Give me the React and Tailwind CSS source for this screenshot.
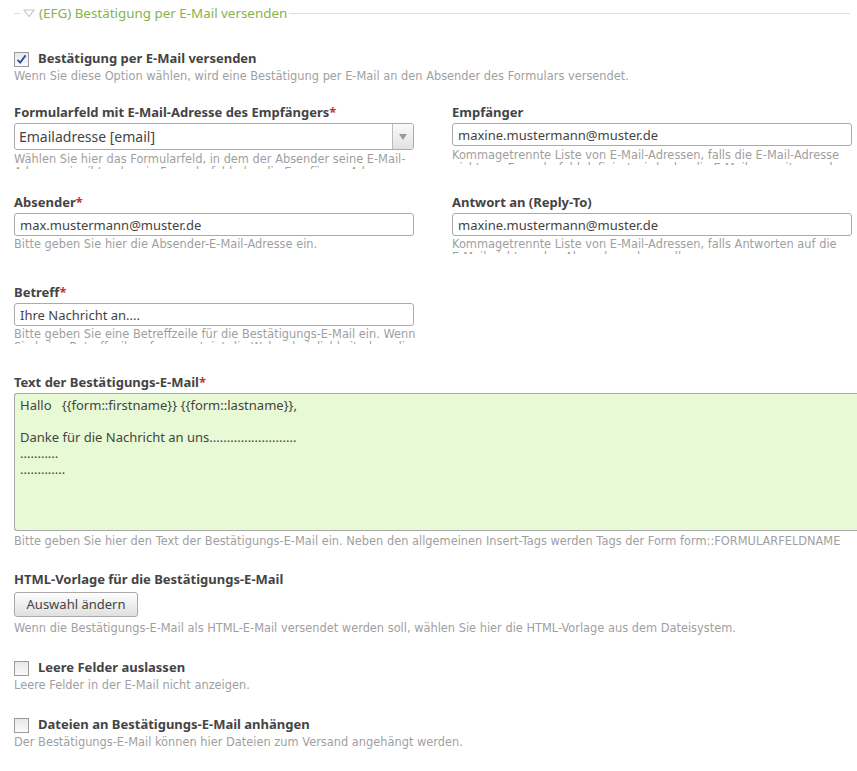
import React from 'react';

const labelFont = { fontFamily: '"Noto Sans", "Open Sans", sans-serif' };
const helpFont = { fontFamily: '"DejaVu Sans", Verdana, sans-serif' };

const Label = ({ children, required }) => (
  <div className="h-[16px] text-[13px] leading-[16px] font-bold text-[#444]" style={labelFont}>
    {children}
    {required && <span className="text-[#c33]">*</span>}
  </div>
);

const Help = ({ children, clip, className = '' }) => (
  <div
    className={`text-[11.4px] leading-[13px] text-[#9f9f9f] ${clip ? 'h-[16px] w-[410px] overflow-hidden' : ''} ${className}`}
    style={helpFont}
  >
    {children}
  </div>
);

const TextInput = ({ value }) => (
  <input
    readOnly
    defaultValue={value}
    className="mt-[3px] block h-[23px] w-[400px] rounded-[3px] border border-[#aaa] bg-white px-[5px] text-[13px] text-[#444] outline-none"
    style={labelFont}
  />
);

const Checkbox = ({ checked }) => (
  <span className="flex h-[15px] w-[15px] shrink-0 items-center justify-center border border-[#9a9a9a] bg-gradient-to-b from-[#e8e8e8] to-[#fafafa]">
    {checked && (
      <svg width="11" height="11" viewBox="0 0 11 11">
        <path d="M1.5 5.8 L4.2 8.6 L9.6 1.4" fill="none" stroke="#2a4fa8" strokeWidth="1.8" />
      </svg>
    )}
  </span>
);

const CheckRow = ({ checked, label, help }) => (
  <div>
    <div className="flex h-[16px] items-center gap-[9px]">
      <Checkbox checked={checked} />
      <span className="text-[13px] font-bold text-[#444]" style={labelFont}>{label}</span>
    </div>
    <Help className="mt-[3px]">{help}</Help>
  </div>
);

export default function App() {
  return (
    <div className="min-h-[771px] w-[857px] overflow-hidden bg-white pl-[14px]">
      {/* legend */}
      <div className="flex h-[26px] items-center">
        <span className="h-px w-[6px] bg-[#ddd]" />
        <svg width="14" height="10" viewBox="0 0 14 10" className="ml-[2px]">
          <path d="M2 2 L12 2 L7 8.5 Z" fill="none" stroke="#c8c8c8" strokeWidth="1.2" />
        </svg>
        <span className="ml-[3px] text-[13.4px] text-[#85b54a]" style={labelFont}>(EFG) Bestätigung per E-Mail versenden</span>
        <span className="ml-[2px] mr-[7px] h-px flex-1 bg-[#ddd]" />
      </div>

      <div className="mt-[25px]">
        <CheckRow
          checked
          label="Bestätigung per E-Mail versenden"
          help="Wenn Sie diese Option wählen, wird eine Bestätigung per E-Mail an den Absender des Formulars versendet."
        />
      </div>

      {/* row 1 */}
      <div className="mt-[21px] flex h-[90px] gap-[38px]">
        <div className="w-[400px]">
          <Label required>Formularfeld mit E-Mail-Adresse des Empfängers</Label>
          <div className="mt-[3px] flex h-[27px] w-[400px] overflow-hidden rounded-[3px] border border-[#aaa] bg-white">
            <div className="flex flex-1 items-center px-[4px] text-[14px] text-[#444]" style={labelFont}>Emailadresse [email]</div>
            <div className="flex w-[21px] items-center justify-center border-l border-[#bbb] bg-gradient-to-b from-[#fafafa] to-[#e2e2e2]">
              <svg width="8" height="6" viewBox="0 0 8 6">
                <path d="M0 0 L8 0 L4 6 Z" fill="#999" />
              </svg>
            </div>
          </div>
          <Help clip className="mt-[3px]">Wählen Sie hier das Formularfeld, in dem der Absender seine E-Mail-Adresse eingibt, oder ein Formularfeld, das die Empfänger-Adresse enthält.</Help>
        </div>
        <div className="w-[400px]">
          <Label>Empfänger</Label>
          <TextInput value="maxine.mustermann@muster.de" />
          <Help clip className="mt-[3px]">Kommagetrennte Liste von E-Mail-Adressen, falls die E-Mail-Adresse nicht aus Formularfeld definiert wird oder die E-Mail an weitere gehen soll.</Help>
        </div>
      </div>

      {/* row 2 */}
      <div className="flex h-[90px] gap-[38px]">
        <div className="w-[400px]">
          <Label required>Absender</Label>
          <TextInput value="max.mustermann@muster.de" />
          <Help clip className="mt-[2px]">Bitte geben Sie hier die Absender-E-Mail-Adresse ein.</Help>
        </div>
        <div className="w-[400px]">
          <Label>Antwort an (Reply-To)</Label>
          <TextInput value="maxine.mustermann@muster.de" />
          <Help clip className="mt-[2px]">Kommagetrennte Liste von E-Mail-Adressen, falls Antworten auf die E‑Mail nicht an den Absender gehen sollen.</Help>
        </div>
      </div>

      {/* row 3 */}
      <div className="flex h-[90px] gap-[38px]">
        <div className="w-[400px]">
          <Label required>Betreff</Label>
          <TextInput value="Ihre Nachricht an...." />
          <Help clip className="mt-[2px]">Bitte geben Sie eine Betreffzeile für die Bestätigungs-E-Mail ein. Wenn Sie keine Betreffzeile erfassen, steigt die Wahrscheinlichkeit, dass die E-Mail als SPAM identifiziert wird.</Help>
        </div>
      </div>

      {/* textarea */}
      <div>
        <Label required>Text der Bestätigungs-E-Mail</Label>
        <textarea
          readOnly
          defaultValue={'Hallo   {{form::firstname}} {{form::lastname}},\n\nDanke für die Nachricht an uns.........................\n...........\n.............'}
          className="mt-[3px] block h-[138px] w-[860px] resize-none rounded-l-[3px] border border-r-0 border-[#aaa] bg-[#e7fad5] px-[5px] py-[3px] text-[13px] leading-[16px] text-[#444] outline-none"
          style={labelFont}
        />
        <Help className="mt-[4px] whitespace-nowrap">Bitte geben Sie hier den Text der Bestätigungs-E-Mail ein. Neben den allgemeinen Insert-Tags werden Tags der Form form::FORMULARFELDNAME</Help>
      </div>

      {/* html template */}
      <div className="mt-[23px]">
        <Label>HTML-Vorlage für die Bestätigungs-E-Mail</Label>
        <button
          type="button"
          className="mt-[5px] block h-[25px] w-[124px] rounded-[3px] border border-[#aaa] bg-gradient-to-b from-[#fdfdfd] to-[#e0e0e0] text-[13px] text-[#444]"
          style={labelFont}
        >
          Auswahl ändern
        </button>
        <Help className="mt-[5px]">Wenn die Bestätigungs-E-Mail als HTML-E-Mail versendet werden soll, wählen Sie hier die HTML-Vorlage aus dem Dateisystem.</Help>
      </div>

      <div className="mt-[25px]">
        <CheckRow
          label="Leere Felder auslassen"
          help="Leere Felder in der E-Mail nicht anzeigen."
        />
      </div>

      <div className="mt-[25px]">
        <CheckRow
          label="Dateien an Bestätigungs-E-Mail anhängen"
          help="Der Bestätigungs-E-Mail können hier Dateien zum Versand angehängt werden."
        />
      </div>
    </div>
  );
}
